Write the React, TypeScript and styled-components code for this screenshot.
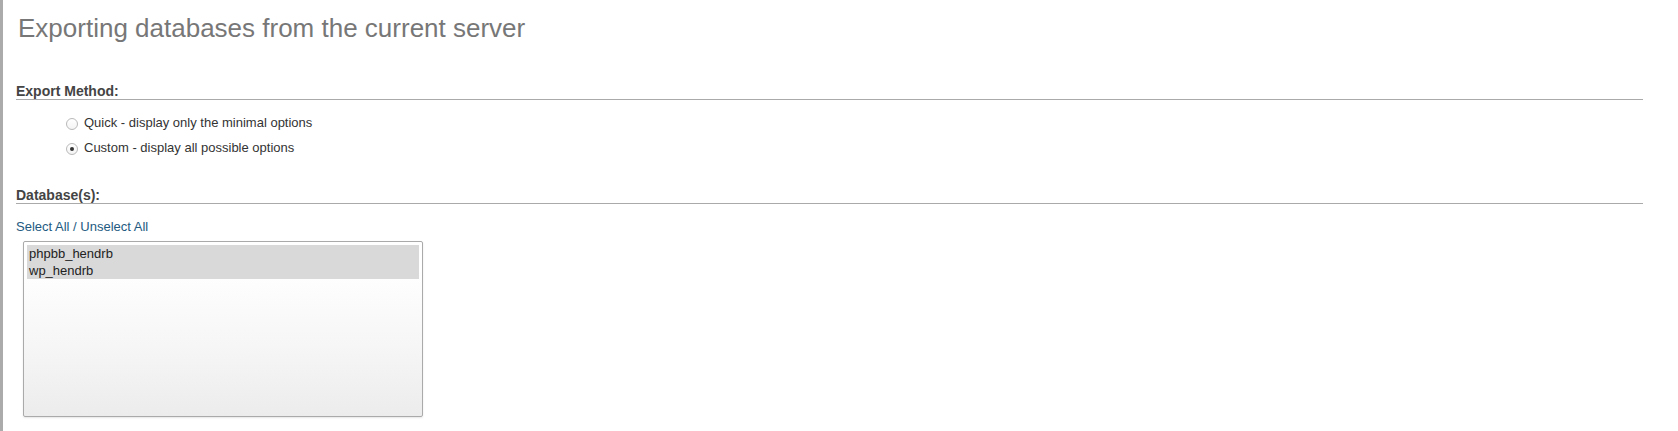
import React, { useState } from 'react';
import styled, { createGlobalStyle } from 'styled-components';

const databases = ['phpbb_hendrb', 'wp_hendrb'];

const methods = [
  { value: 'quick', label: 'Quick - display only the minimal options' },
  { value: 'custom', label: 'Custom - display all possible options' },
];

const GlobalStyle = createGlobalStyle`
  html, body {
    margin: 0;
    padding: 0;
    background: #fff;
  }
  body {
    font-family: "Liberation Sans", Arial, Helvetica, sans-serif;
    font-size: 13px;
    color: #333;
  }
`;

const Page = styled.div`
  display: flex;
  min-height: 431px;
`;

const ResizeBar = styled.div`
  width: 3px;
  flex-shrink: 0;
  background-color: #ababab;
`;

const Main = styled.div`
  flex: 1;
  padding: 0 35px 0 13px;
`;

const Title = styled.h2`
  margin: 13px 0 40px;
  padding-left: 2px;
  font-size: 26px;
  line-height: 30px;
  font-weight: normal;
  color: #777;
`;

const Section = styled.div<{ $gap?: number }>`
  margin-bottom: ${(p) => p.$gap ?? 0}px;
`;

const SectionHeader = styled.h3`
  margin: 0;
  font-size: 14px;
  line-height: 16px;
  font-weight: bold;
  color: #444;
  border-bottom: 1px solid #aaa;
`;

const RadioList = styled.ul`
  list-style: none;
  margin: 10px 0 0;
  padding: 0 0 0 50px;
`;

const RadioRow = styled.li`
  display: flex;
  align-items: center;
  height: 25px;
`;

const Radio = styled.input.attrs({ type: 'radio' })`
  appearance: none;
  -webkit-appearance: none;
  margin: 3px 6px 0 0;
  width: 12px;
  height: 12px;
  border: 1px solid #b9b9b9;
  border-radius: 50%;
  background: linear-gradient(#fff, #f4f4f4);
  box-sizing: border-box;
  display: grid;
  place-items: center;
  cursor: pointer;

  &:checked::after {
    content: '';
    width: 4px;
    height: 4px;
    border-radius: 50%;
    background: #333;
  }
`;

const RadioLabel = styled.label`
  font-size: 13px;
  line-height: 15px;
  color: #333;
  cursor: pointer;
`;

const SelectLinks = styled.div`
  margin-top: 15px;
  font-size: 13px;
  line-height: 15px;
  color: #235a81;
`;

const LinkText = styled.a`
  color: #235a81;
  text-decoration: none;
  cursor: pointer;
`;

const ListBox = styled.div`
  margin: 7px 0 0 7px;
  width: 400px;
  height: 176px;
  box-sizing: border-box;
  padding: 3px 3px;
  border: 1px solid #aaa;
  border-radius: 2px;
  background: linear-gradient(#fff 15%, #f6f6f6 60%, #ececec);
  box-shadow: 0 1px 2px #e6e6e6;
`;

const Option = styled.div<{ $selected: boolean }>`
  height: 17px;
  line-height: 17px;
  padding-left: 2px;
  font-size: 13px;
  color: #222;
  background-color: ${(p) => (p.$selected ? '#d9d9d9' : 'transparent')};
  cursor: default;
`;

const App = (): JSX.Element => {
  const [method, setMethod] = useState('custom');
  const [selected, setSelected] = useState<string[]>(databases);

  const toggle = (db: string) => {
    setSelected((prev) =>
      prev.includes(db) ? prev.filter((d) => d !== db) : [...prev, db],
    );
  };

  return (
    <>
      <GlobalStyle />
      <Page>
        <ResizeBar />
        <Main>
          <Title>Exporting databases from the current server</Title>

          <Section $gap={27}>
            <SectionHeader>Export Method:</SectionHeader>
            <RadioList>
              {methods.map((m) => (
                <RadioRow key={m.value}>
                  <Radio
                    id={`method_${m.value}`}
                    name="export_method"
                    checked={method === m.value}
                    onChange={() => setMethod(m.value)}
                  />
                  <RadioLabel htmlFor={`method_${m.value}`}>{m.label}</RadioLabel>
                </RadioRow>
              ))}
            </RadioList>
          </Section>

          <Section>
            <SectionHeader>Database(s):</SectionHeader>
            <SelectLinks>
              <LinkText onClick={() => setSelected(databases)}>Select All</LinkText>
              {' / '}
              <LinkText onClick={() => setSelected([])}>Unselect All</LinkText>
            </SelectLinks>
            <ListBox role="listbox" aria-multiselectable="true">
              {databases.map((db) => (
                <Option
                  key={db}
                  role="option"
                  aria-selected={selected.includes(db)}
                  $selected={selected.includes(db)}
                  onClick={() => toggle(db)}
                >
                  {db}
                </Option>
              ))}
            </ListBox>
          </Section>
        </Main>
      </Page>
    </>
  );
};

export default App;
